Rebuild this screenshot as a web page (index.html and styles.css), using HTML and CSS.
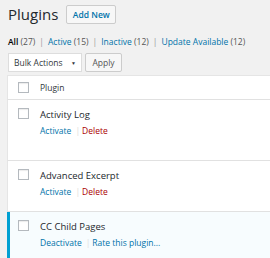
FILE: index.html
```html
<!DOCTYPE html>
<html>
<head>
<meta charset="utf-8">
<link rel="stylesheet" href="styles.css">
</head>
<body>
<div class="wrap">
  <div class="head">
    <h1 class="title">Plugins</h1>
    <a class="add-new">Add New</a>
  </div>
  <ul class="filters">
    <li><span class="current">All</span> <span class="count">(27)</span></li>
    <li class="sep">|</li>
    <li><a>Active</a> <span class="count">(15)</span></li>
    <li class="sep">|</li>
    <li><a>Inactive</a> <span class="count">(12)</span></li>
    <li class="sep">|</li>
    <li><a>Update Available</a> <span class="count">(12)</span></li>
  </ul>
  <div class="tablenav">
    <div class="select"><span>Bulk Actions</span><span class="caret">&#9660;</span></div>
    <div class="btn">Apply</div>
  </div>
</div>
<div class="table">
  <div class="row header-row">
    <span class="cb"></span>
    <span class="col-name">Plugin</span>
  </div>
  <div class="row plugin tall">
    <span class="cb"></span>
    <div class="info">
      <div class="name">Activity Log</div>
      <div class="actions"><a>Activate</a><span class="bar">|</span><a class="del">Delete</a></div>
    </div>
  </div>
  <div class="row plugin">
    <span class="cb"></span>
    <div class="info">
      <div class="name">Advanced Excerpt</div>
      <div class="actions"><a>Activate</a><span class="bar">|</span><a class="del">Delete</a></div>
    </div>
  </div>
  <div class="row plugin active">
    <span class="cb"></span>
    <div class="info">
      <div class="name">CC Child Pages</div>
      <div class="actions"><a>Deactivate</a><span class="bar">|</span><a>Rate this plugin...</a></div>
    </div>
  </div>
</div>
</body>
</html>
```

FILE: styles.css
```css
html, body {
  margin: 0;
  padding: 0;
  overflow: hidden;
}
body {
  background: #f1f1f1;
  font-family: "Open Sans", "Liberation Sans", sans-serif;
  font-size: 8.5px;
  color: #444;
  width: 270px;
  height: 258px;
}
a { color: #0073aa; text-decoration: none; }

.wrap { padding: 5px 0 0 8px; }

.head {
  display: flex;
  align-items: center;
  gap: 8px;
  height: 19px;
}
.title {
  margin: 0;
  font-size: 15px;
  font-weight: 400;
  color: #23282d;
  line-height: 19px;
}
.add-new {
  box-sizing: border-box;
  height: 19px;
  width: 50px;
  text-align: center;
  border: 1px solid #ccc;
  border-radius: 2px;
  background: #f7f7f7;
  font-size: 8.5px;
  font-weight: 600;
  line-height: 17px;
}

.filters {
  list-style: none;
  margin: 11px 0 0;
  padding: 0;
  display: flex;
  gap: 4px;
  line-height: 14px;
  white-space: nowrap;
}
.filters .current { color: #000; font-weight: 600; }
.filters .count { color: #555; }
.filters .sep { color: #999; }

.tablenav {
  display: flex;
  gap: 3px;
  margin-top: 4px;
  height: 19px;
}
.select {
  box-sizing: border-box;
  width: 74px;
  height: 19px;
  border: 1px solid #ddd;
  background: #fff;
  color: #32373c;
  display: flex;
  align-items: center;
  justify-content: space-between;
  padding: 0 5px 0 5px;
}
.caret { font-size: 5px; color: #32373c; }
.btn {
  box-sizing: border-box;
  width: 37px;
  height: 19px;
  border: 1px solid #ccc;
  border-radius: 2px;
  background: #f7f7f7;
  color: #555;
  display: flex;
  align-items: center;
  justify-content: center;
}

.table {
  margin: 3px 0 0 7px;
  width: 330px;
  background: #fff;
  border-top: 1px solid #e5e5e5;
}
.row {
  display: flex;
  border-left: 1px solid #e5e5e5;
  border-bottom: 1px solid #e1e1e1;
}
.cb {
  box-sizing: border-box;
  flex: none;
  width: 11px;
  height: 11px;
  margin: 8px 11px 0 10px;
  border: 1px solid #b4b9be;
  background: #fff;
  box-shadow: inset 0 1px 1px rgba(0,0,0,.08);
}
.header-row { height: 23px; align-items: flex-start; }
.header-row .cb { margin-top: 6px; }
.col-name {
  color: #32373c;
  line-height: 14px;
  padding-top: 5px;
}
.plugin { height: 50px; }
.plugin.tall { height: 60px; }
.plugin .cb { margin-top: 8px; }
.info { padding-top: 7px; line-height: 15px; }
.name { color: #23282d; font-size: 9.5px; }
.actions { padding-top: 1px; white-space: nowrap; }
.bar { color: #ddd; margin: 0 2px 0 4px; }
.del { color: #a00; }
.active {
  background: #f7fcfe;
  border-left: 3px solid #00a0d2;
  height: 60px;
  border-bottom: none;
}
.active .cb { margin-left: 8px; }
```
